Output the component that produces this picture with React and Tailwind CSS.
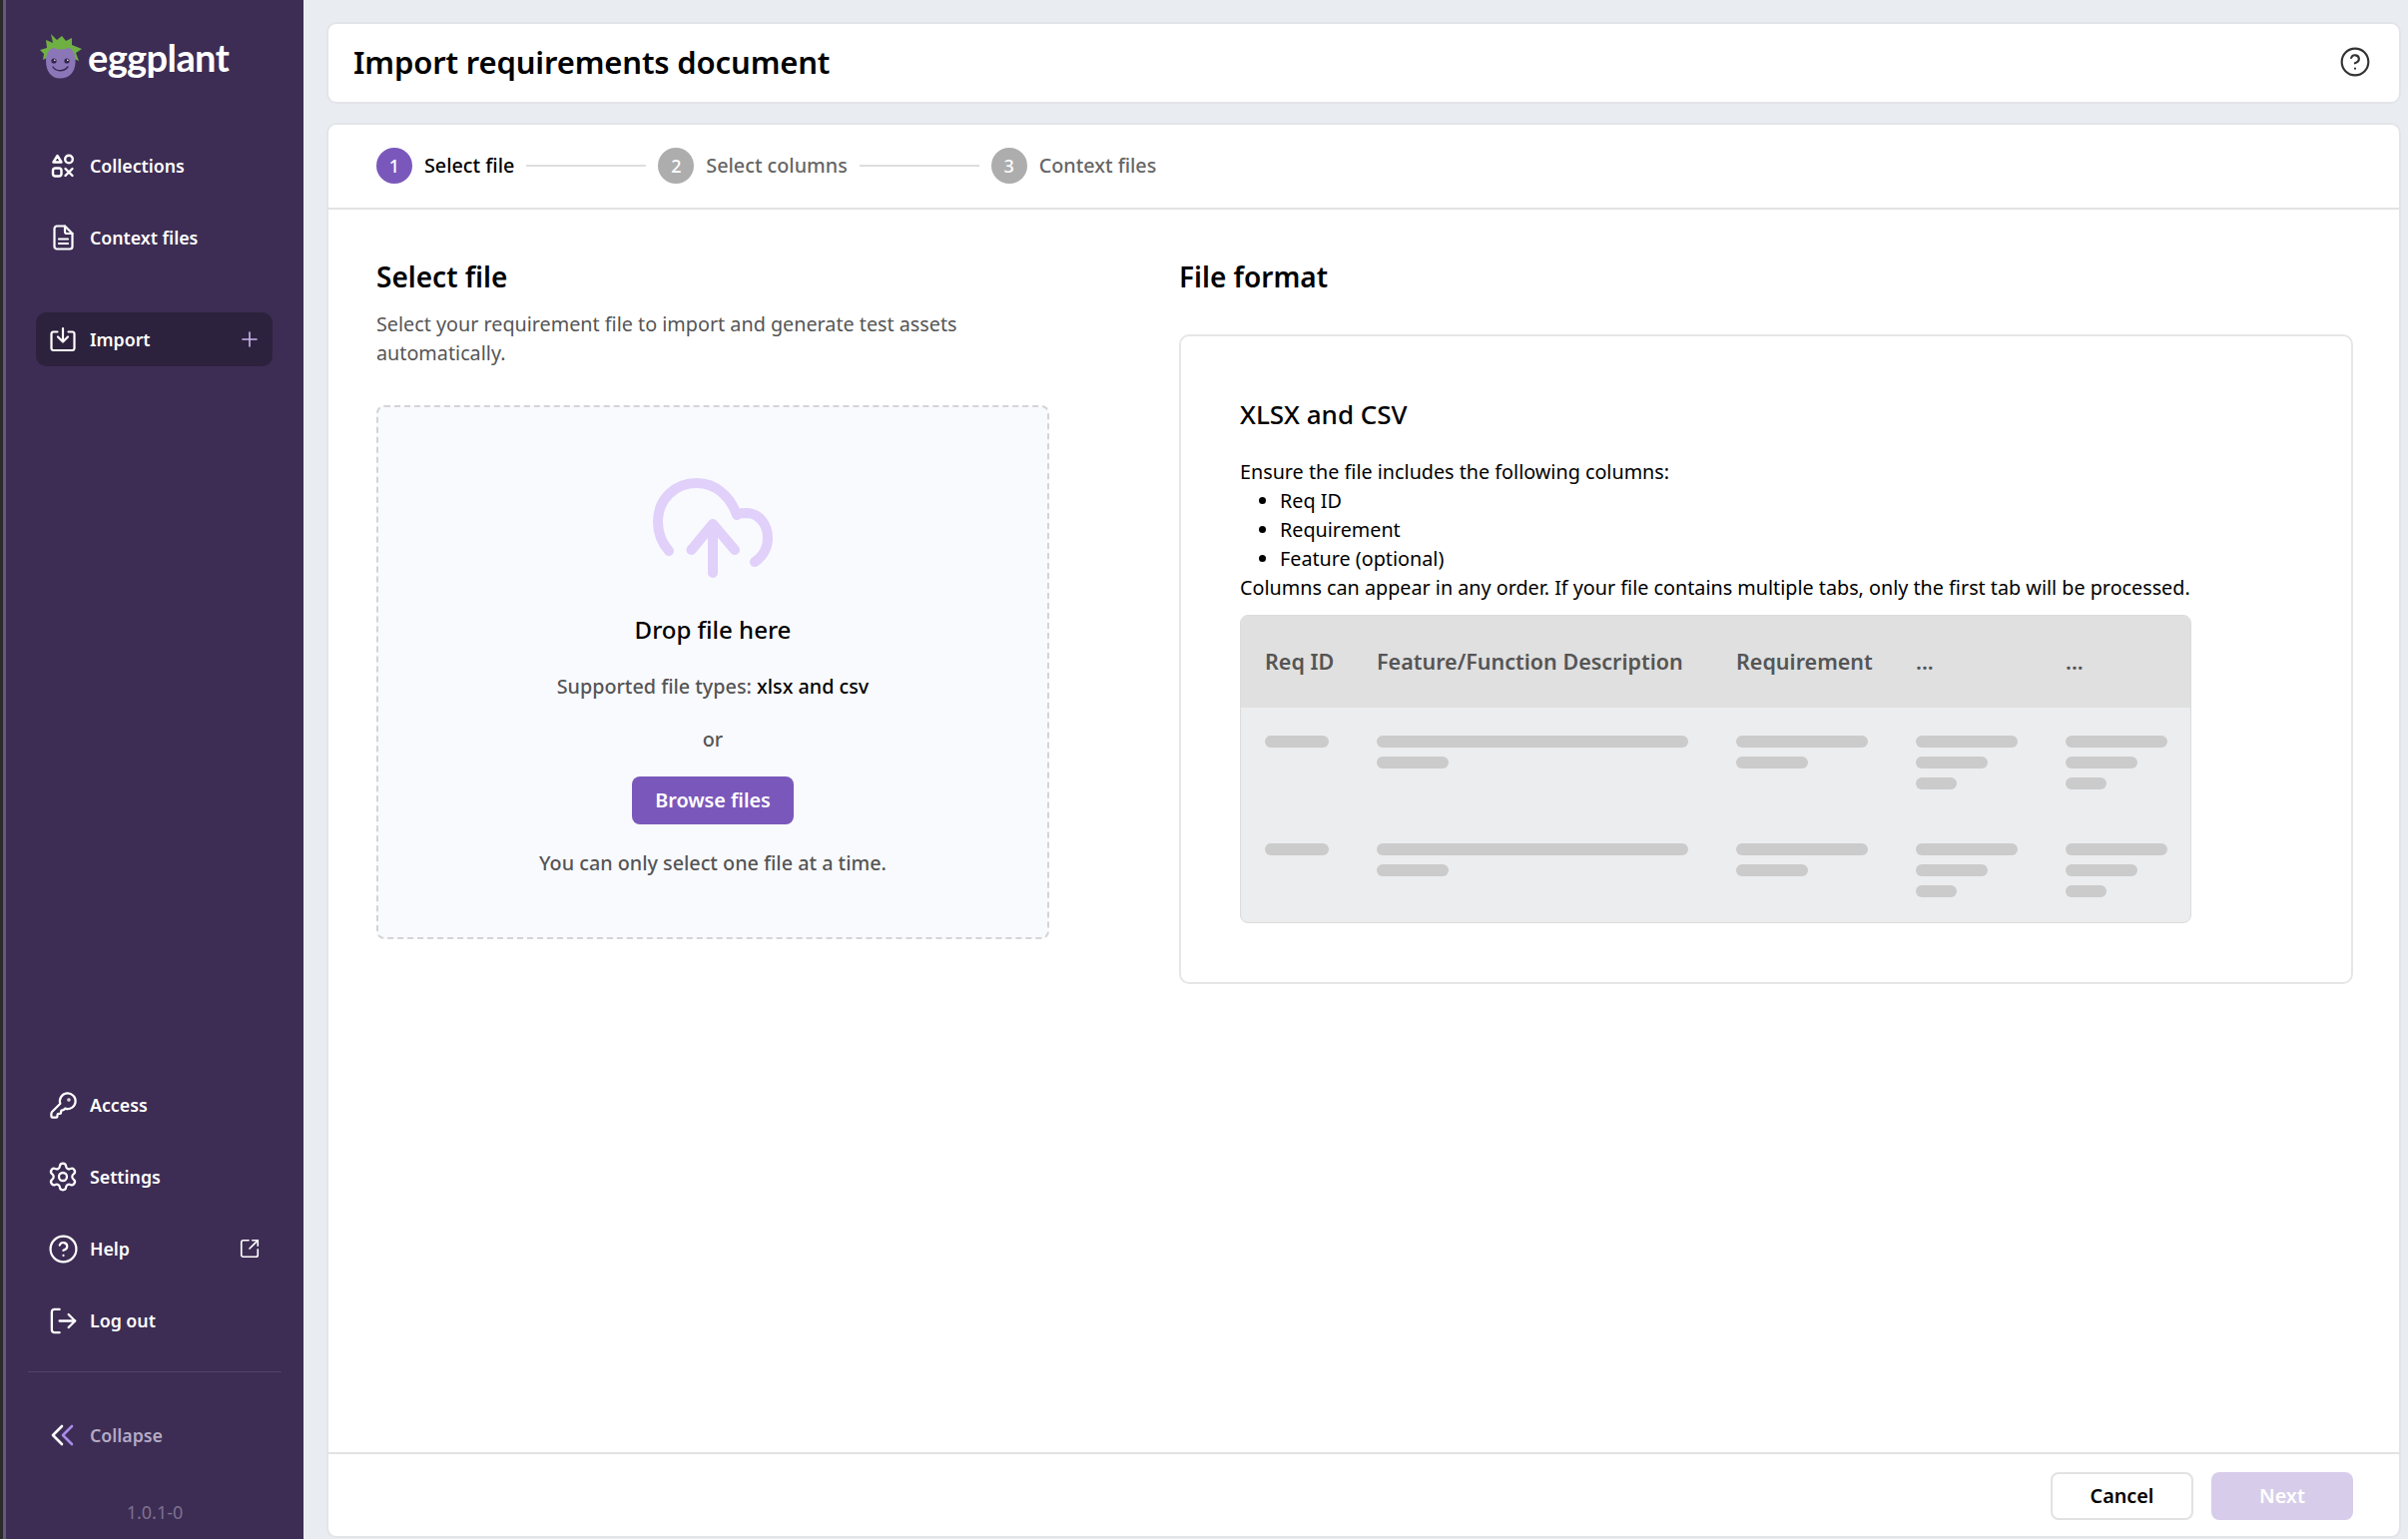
import { KeyRound, Settings, CircleHelp, SquareArrowOutUpRight, Plus, LogOut } from 'lucide-react';

function CollectionsIcon() {
  return (
    <svg width="26" height="26" viewBox="0 0 26 26" fill="none" stroke="white" strokeWidth="2.4" strokeLinejoin="round" strokeLinecap="round">
      <path d="M7.5 3 L11.5 9.5 H3.5 Z" />
      <circle cx="19" cy="6.5" r="3.8" />
      <rect x="3" y="15.5" width="8.5" height="8" rx="2.5" />
      <path d="M15.5 16 L22.5 23 M22.5 16 L15.5 23" />
    </svg>
  );
}

function FileIcon() {
  return (
    <svg width="26" height="26" viewBox="0 0 26 26" fill="none" stroke="white" strokeWidth="2.2" strokeLinejoin="round" strokeLinecap="round">
      <path d="M7 1.5 H15 L22.5 9 V22 a2.5 2.5 0 0 1 -2.5 2.5 H7 a2.5 2.5 0 0 1 -2.5 -2.5 V4 a2.5 2.5 0 0 1 2.5 -2.5 Z" />
      <path d="M15 1.5 V7 a2 2 0 0 0 2 2 H22.5" />
      <path d="M9 14.5 H18 M9 19 H18" />
    </svg>
  );
}

function ImportIcon() {
  return (
    <svg width="26" height="26" viewBox="0 0 26 26" fill="none" stroke="white" strokeWidth="2.2" strokeLinejoin="round" strokeLinecap="round">
      <path d="M7.5 5.5 H3.5 a2.2 2.2 0 0 0 -2 2 V22 a2.2 2.2 0 0 0 2 2 H22.5 a2.2 2.2 0 0 0 2 -2 V7.5 a2.2 2.2 0 0 0 -2 -2 H18.5" />
      <path d="M13 2 V15 M8 10.5 L13 15.5 L18 10.5" />
    </svg>
  );
}

function CollapseIcon() {
  return (
    <svg width="24" height="24" viewBox="0 0 24 24" fill="none" strokeWidth="2.6" strokeLinejoin="round" strokeLinecap="round">
      <path d="M11 3 L2 12 L11 21" stroke="white" />
      <path d="M21 3 L12 12 L21 21" stroke="#a98be8" />
    </svg>
  );
}

function Logo() {
  return (
    <div className="flex items-center h-[48px] ml-[34px]">
      <svg width="44" height="48" viewBox="0 0 44 48" className="shrink-0">
        <path d="M0 17 L7 15 L6 7 L13 10 L11 1 L17 7 L22 3 L26 8 L32 5 L32 12 L42 16 L36 20 L39 28 L34 26 L34 30 H9 L7 25 L3 27 L4 21 Z" fill="#6fb043" />
        <path d="M6 28 C6 20 10 15 14 15 C18 17 24 17 28 15 C33 15 36 22 35.5 30 C35 40 29 45.5 20 45.5 C11 45.5 6 38 6 28 Z" fill="#8b76b8" />
        <circle cx="14" cy="28" r="2.6" fill="#33264a" />
        <circle cx="27" cy="28" r="2.6" fill="#33264a" />
        <circle cx="14.8" cy="27.2" r="0.8" fill="white" />
        <circle cx="27.8" cy="27.2" r="0.8" fill="white" />
        <path d="M13 34 C16 39 24 39 28 34" fill="none" stroke="#33264a" strokeWidth="1.4" strokeLinecap="round" />
      </svg>
      <span className="ml-[4px] font-['Lato',sans-serif] font-bold text-[38px] leading-none tracking-[-0.6px] text-white">eggplant</span>
    </div>
  );
}

function NavItem({ icon, label, right, active, muted }) {
  return (
    <div className={`flex items-center h-[54px] w-[237px] ml-[30px] pl-[14px] pr-[11px] rounded-[10px] ${active ? 'bg-[#2d223d]' : ''}`}>
      <span className="w-[26px] h-[26px] flex items-center justify-center shrink-0">{icon}</span>
      <span className={`ml-[14px] text-[17.75px] font-semibold ${muted ? 'text-[#b4aac4]' : 'text-white'}`}>{label}</span>
      {right && <span className="ml-auto w-[24px] flex items-center justify-center">{right}</span>}
    </div>
  );
}

function Sidebar() {
  return (
    <aside className="w-[301px] h-full bg-[#3d2d54] border-l-[3px] border-[#66587d] flex flex-col pt-[33px] pb-[13px] shrink-0">
      <Logo />
      <nav className="flex flex-col gap-[18px] mt-[58px]">
        <NavItem icon={<CollectionsIcon />} label="Collections" />
        <NavItem icon={<FileIcon />} label="Context files" />
      </nav>
      <div className="mt-[48px]">
        <NavItem icon={<ImportIcon />} label="Import" active right={<Plus size={24} strokeWidth={1.6} color="#c8b6ee" />} />
      </div>
      <nav className="flex flex-col gap-[18px] mt-auto">
        <NavItem icon={<KeyRound size={29} strokeWidth={1.85} color="white" className="shrink-0" />} label="Access" />
        <NavItem icon={<Settings size={32} strokeWidth={1.7} color="white" className="shrink-0" />} label="Settings" />
        <NavItem icon={<CircleHelp size={31} strokeWidth={1.7} color="white" className="shrink-0" />} label="Help" right={<SquareArrowOutUpRight size={22} strokeWidth={1.8} color="white" />} />
        <NavItem icon={<LogOut size={31} strokeWidth={1.8} color="white" className="shrink-0" />} label="Log out" />
      </nav>
      <div className="h-px bg-[#52436b] mt-[24px] mx-[22px]" />
      <div className="mt-[36px]">
        <NavItem icon={<CollapseIcon />} label="Collapse" muted />
      </div>
      <div className="mt-[36px] text-center text-[18px] leading-[28px] text-[#7d7190]">1.0.1-0</div>
    </aside>
  );
}

function Step({ n, label, active }) {
  return (
    <div className="flex items-center gap-[12px]">
      <span className={`w-[36px] h-[36px] rounded-full flex items-center justify-center text-white text-[18px] font-medium ${active ? 'bg-[#7a58bb]' : 'bg-[#adadad]'}`}>{n}</span>
      <span className={`text-[19.75px] font-medium ${active ? 'text-black' : 'text-[#666]'}`}>{label}</span>
    </div>
  );
}

function Stepper() {
  return (
    <div className="h-[85px] border-b-2 border-[#e2e2e2] flex items-center pl-[48px] pb-[1px] shrink-0">
      <Step n="1" label="Select file" active />
      <div className="w-[120px] h-[2px] bg-[#dedede] mx-[12px]" />
      <Step n="2" label="Select columns" />
      <div className="w-[120px] h-[2px] bg-[#dedede] mx-[12px]" />
      <Step n="3" label="Context files" />
    </div>
  );
}

function CloudUpload() {
  return (
    <svg width="120" height="102" viewBox="0 0 120 102" fill="none" stroke="#e0d0fa" strokeWidth="10" strokeLinecap="round" strokeLinejoin="round">
      <path d="M16 74 C9 66 5 56 5 45 C5 22 22 6 44 6 C63 6 78 20 84 38 C86 36 90 36 95 36 C107 37 115 48 115 61 C115 71 110 80 102 85" />
      <path d="M60 96 V50 M38.5 73 L60 47 L82 73" />
    </svg>
  );
}

function DropZone() {
  return (
    <div className="mt-[38px] h-[535px] rounded-[8px] border-2 border-dashed border-[#d4d4d4] bg-[#f9fafe] flex flex-col items-center pt-[70px]">
      <CloudUpload />
      <div className="mt-[34px] text-[24px] leading-[34px] font-medium text-black">Drop file here</div>
      <div className="mt-[25px] text-[19.75px] leading-[29px] font-medium text-[#555]">Supported file types: <span className="text-black">xlsx and csv</span></div>
      <div className="mt-[24px] text-[19.75px] leading-[29px] font-medium text-[#555]">or</div>
      <button className="mt-[23px] w-[162px] h-[48px] rounded-[8px] bg-[#7a58bb] text-white text-[19.75px] font-semibold">Browse files</button>
      <div className="mt-[24px] text-[19.75px] leading-[29px] font-medium text-[#555]">You can only select one file at a time.</div>
    </div>
  );
}

const bars = [[64], [312, 72], [132, 72], [102, 72, 41], [102, 72, 41]];

function SkeletonRow() {
  return (
    <div className="grid grid-cols-[112px_360px_180px_150px_1fr] h-[108px] pl-[24px] pt-[28px]">
      {bars.map((col, i) => (
        <div key={i} className="flex flex-col gap-[9px]">
          {col.map((w, j) => (
            <div key={j} className="h-[12px] rounded-full bg-[#cbcbcb]" style={{ width: w }} />
          ))}
        </div>
      ))}
    </div>
  );
}

function SampleTable() {
  const headers = ['Req ID', 'Feature/Function Description', 'Requirement', '...', '...'];
  return (
    <div className="w-[953px] h-[309px] mt-[13px] rounded-[8px] border border-[#dcdcdc] bg-[#ecedef] overflow-hidden">
      <div className="grid grid-cols-[112px_360px_180px_150px_1fr] items-center h-[92px] pl-[24px] bg-[#e0e0e0]">
        {headers.map((h, i) => (
          <span key={i} className="text-[21.5px] font-semibold text-[#555]">{h}</span>
        ))}
      </div>
      <SkeletonRow />
      <SkeletonRow />
    </div>
  );
}

function FileFormat() {
  return (
    <div className="flex-1 min-w-0">
      <h2 className="text-[28px] leading-[38px] font-semibold text-black">File format</h2>
      <div className="mt-[39px] h-[651px] rounded-[10px] border-2 border-[#e6e6e6] pl-[59px] pt-[60px]">
        <h3 className="text-[26px] leading-[36px] font-medium text-black">XLSX and CSV</h3>
        <div className="mt-[25px] text-[19.75px] leading-[29px] text-black">
          <p>Ensure the file includes the following columns:</p>
          <ul className="list-disc pl-[40px]">
            <li>Req ID</li>
            <li>Requirement</li>
            <li>Feature (optional)</li>
          </ul>
          <p>Columns can appear in any order. If your file contains multiple tabs, only the first tab will be processed.</p>
        </div>
        <SampleTable />
      </div>
    </div>
  );
}

export default function App() {
  return (
    <div className="flex w-[2412px] h-[1542px] bg-[#e9edf2] font-['Noto_Sans',sans-serif] overflow-hidden">
      <div className="w-[3px] h-full bg-[#2b2b2b] shrink-0" />
      <Sidebar />
      <main className="flex-1 min-w-0 flex flex-col gap-[19px] pt-[22px] pb-[1px] pl-[23px] pr-[7px]">
        <header className="h-[82px] shrink-0 bg-white rounded-[10px] border-2 border-[#e2e4e8] flex items-center justify-between pl-[25px] pr-[28px] pb-[2px]">
          <h1 className="text-[31px] font-semibold tracking-[-0.15px] text-black">Import requirements document</h1>
          <CircleHelp size={32} strokeWidth={1.6} color="#333" />
        </header>
        <section className="flex-1 min-h-0 bg-white rounded-[10px] border-2 border-[#e2e4e8] flex flex-col">
          <Stepper />
          <div className="flex-1 min-h-0 flex gap-[130px] pl-[48px] pr-[46px] pt-[48px]">
            <div className="w-[674px] shrink-0">
              <h2 className="text-[28px] leading-[38px] font-semibold text-black">Select file</h2>
              <p className="mt-[14px] text-[19.75px] leading-[29px] text-[#555]">Select your requirement file to import and generate test assets automatically.</p>
              <DropZone />
            </div>
            <FileFormat />
          </div>
          <footer className="h-[84px] border-t-2 border-[#e2e2e2] flex items-start justify-end gap-[18px] pt-[18px] pr-[46px] shrink-0">
            <button className="w-[143px] h-[48px] rounded-[8px] border-2 border-[#e2e2e2] bg-white text-[19.75px] font-semibold text-black">Cancel</button>
            <button className="w-[142px] h-[48px] rounded-[8px] bg-[#d7cdea] text-[19.75px] font-semibold text-white">Next</button>
          </footer>
        </section>
      </main>
    </div>
  );
}
